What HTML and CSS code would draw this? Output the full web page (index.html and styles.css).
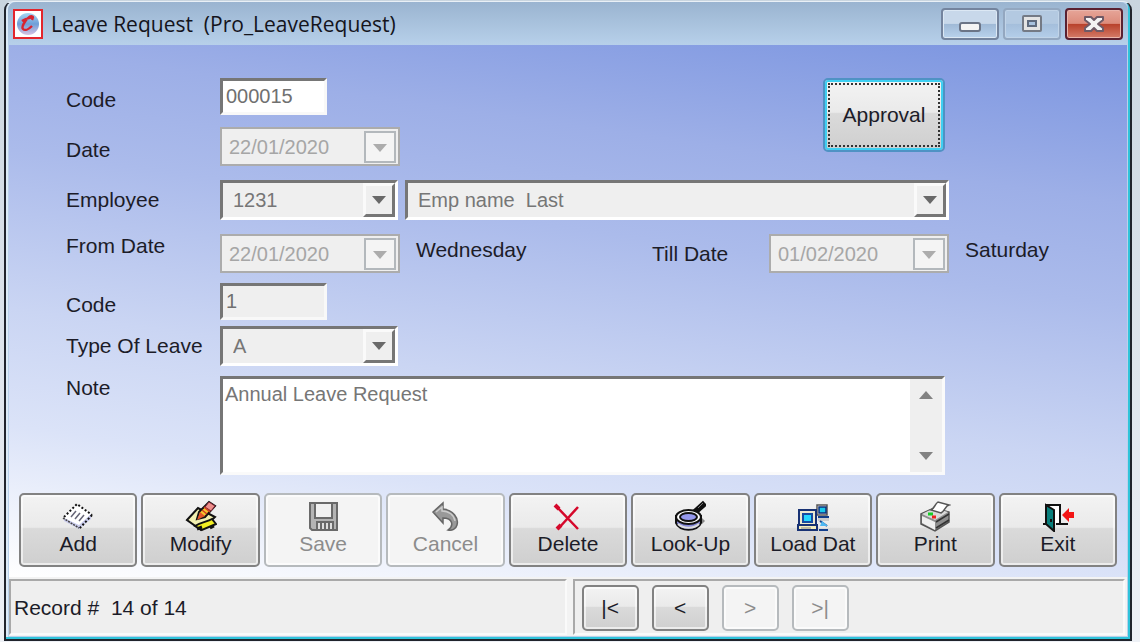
FILE: index.html
```html
<!DOCTYPE html>
<html lang="en">
<head>
    <meta charset="UTF-8">
    <meta name="viewport" content="width=device-width, initial-scale=1.0">
    <title>Leave Request</title>
    <link rel="stylesheet" href="styles.css">
</head>
<body>
    <div class="window">
        <header class="titlebar">
            <svg class="app-icon" viewBox="0 0 30 30">
                <defs>
                    <linearGradient id="ball" x1="0" y1="0" x2="0" y2="1">
                        <stop offset="0" stop-color="#a5d6f2"/>
                        <stop offset="0.5" stop-color="#6f9fd8"/>
                        <stop offset="1" stop-color="#d8c2e2"/>
                    </linearGradient>
                </defs>
                <rect x="1" y="1" width="28" height="28" fill="#fff" stroke="#e3262c" stroke-width="2"/>
                <circle cx="15" cy="15" r="11" fill="url(#ball)"/>
                <path d="M19 11c2-4-1-5-4-2s-7 9-5 11 6 0 9-3M9 12c4-3 8-3 12-4" fill="none" stroke="#d8232f" stroke-width="2.4"/>
            </svg>
            <h1>Leave Request&nbsp; (Pro_LeaveRequest)</h1>
            <div class="controls">
                <button class="control" aria-label="Minimize">
                    <svg width="24" height="20" viewBox="0 0 24 20"><rect x="2" y="9" width="20" height="8" rx="2" fill="#f4f4f4" stroke="#6b7486" stroke-width="2"/></svg>
                </button>
                <button class="control faded" aria-label="Maximize">
                    <svg width="24" height="20" viewBox="0 0 24 20"><rect x="3" y="2" width="18" height="15" rx="1" fill="#e4e4e4" stroke="#747a85" stroke-width="2"/><rect x="8" y="7" width="8" height="5" fill="#a9c3df" stroke="#5f6b7e" stroke-width="2"/></svg>
                </button>
                <button class="control close" aria-label="Close">
                    <svg width="24" height="20" viewBox="0 0 24 20"><path d="M3 3h6l3 3 3-3h6v3l-5 4 5 4v3h-6l-3-3-3 3H3v-3l5-4-5-4z" fill="#f3f3f3" stroke="#6f5a66" stroke-width="2" stroke-linejoin="round"/></svg>
                </button>
            </div>
        </header>

        <main class="form">
            <div class="top">
                <div>
                    <div class="row">
                        <label class="label low" for="code">Code</label>
                        <input class="text" id="code" type="text" value="000015" readonly>
                    </div>
                    <div class="row spaced">
                        <label class="label low" for="date">Date</label>
                        <div class="datebox">
                            <input id="date" type="text" value="22/01/2020" disabled>
                            <button class="drop" aria-label="Open calendar" disabled><svg width="14" height="8"><path d="M0 0h14L7 8z"/></svg></button>
                        </div>
                    </div>
                </div>
                <button class="button approval">Approval</button>
            </div>
            <div class="row wide spaced">
                <label class="label" for="employee">Employee</label>
                <div class="combo">
                    <select id="employee" disabled><option>1231</option></select>
                    <span class="arrow"><svg width="14" height="8"><path d="M0 0h14L7 8z"/></svg></span>
                </div>
                <div class="combo name">
                    <select aria-label="Employee name" disabled><option>Emp name&nbsp; Last</option></select>
                    <span class="arrow"><svg width="14" height="8"><path d="M0 0h14L7 8z"/></svg></span>
                </div>
            </div>
            <div class="row">
                <label class="label high" for="from">From Date</label>
                <div class="datebox">
                    <input id="from" type="text" value="22/01/2020" disabled>
                    <button class="drop" aria-label="Open calendar" disabled><svg width="14" height="8"><path d="M0 0h14L7 8z"/></svg></button>
                </div>
                <span class="weekday grow">Wednesday</span>
                <label class="label till" for="till">Till Date</label>
                <div class="datebox">
                    <input id="till" type="text" value="01/02/2020" disabled>
                    <button class="drop" aria-label="Open calendar" disabled><svg width="14" height="8"><path d="M0 0h14L7 8z"/></svg></button>
                </div>
                <span class="weekday last">Saturday</span>
            </div>
            <div class="row tight">
                <label class="label low" for="leave-code">Code</label>
                <input class="text grey" id="leave-code" type="text" value="1" readonly>
            </div>
            <div class="row">
                <label class="label" for="type">Type Of Leave</label>
                <div class="combo">
                    <select id="type" disabled><option>A</option></select>
                    <span class="arrow"><svg width="14" height="8"><path d="M0 0h14L7 8z"/></svg></span>
                </div>
            </div>
            <div class="row note-row">
                <label class="label high" for="note">Note</label>
                <div class="note">
                    <textarea id="note" readonly>Annual Leave Request</textarea>
                    <div class="scrollbar">
                        <svg width="14" height="8"><path d="M0 8h14L7 0z"/></svg>
                        <svg width="14" height="8"><path d="M0 0h14L7 8z"/></svg>
                    </div>
                </div>
            </div>

            <div class="toolbar">
                <button class="button tool">
                    <svg class="icon" viewBox="0 0 32 32">
                        <path d="M1 17 14 5l16 9-13 13z" fill="#fff"/>
                        <path d="M2 18l15 7 12-11v5L17 29 2 21z" fill="#c9cbec"/>
                        <path d="M2 17 15 4l15 11M30 15 17 29" fill="none" stroke="#111" stroke-width="2" stroke-dasharray="2 2"/>
                        <path d="M1 18l16 10" fill="none" stroke="#444" stroke-width="1.5" stroke-dasharray="2 1"/>
                        <path d="M9 17l5-6M13 19l5-6M17 21l5-6" stroke="#667" stroke-width="1.5"/>
                    </svg>
                    Add
                </button>
                <button class="button tool">
                    <svg class="icon" viewBox="0 0 32 32">
                        <path d="M2 20 13 8l17 9-14 13z" fill="#f2f0b0" stroke="#111" stroke-width="2"/>
                        <path d="M10 26c6-4 12-4 17-7l4 5-14 6z" fill="#f2ee22" stroke="#111" stroke-width="2"/>
                        <path d="M12 19l2-7L24 2l6 4-10 11z" fill="#f6c62d" stroke="#111" stroke-width="2"/>
                        <path d="M24 2l6 4-4 5-6-4z" fill="#ed8e8b" stroke="#7d2230" stroke-width="1"/>
                        <path d="M12 20l3-8 5 4z" fill="#e2562a"/>
                        <path d="M19 7l6 5M17 10l5 4" stroke="#d33c22" stroke-width="1.5"/>
                        <path d="M12 29l5-2M25 28l4-2" stroke="#111" stroke-width="3"/>
                    </svg>
                    Modify
                </button>
                <button class="button tool" disabled>
                    <svg class="icon" viewBox="0 0 32 32">
                        <path d="M3 3h27v27H5l-2-2z" fill="#b4b4b4" stroke="#6a6a6a" stroke-width="2"/>
                        <path d="M8 3h17v15H8z" fill="#f1f1f1" stroke="#6a6a6a" stroke-width="2"/>
                        <path d="M10 22h16v8H10z" fill="#dedede" stroke="#6a6a6a" stroke-width="2"/>
                        <path d="M14 22v8M18 22v8M22 22v8" stroke="#6a6a6a" stroke-width="2"/>
                    </svg>
                    Save
                </button>
                <button class="button tool" disabled>
                    <svg class="icon" viewBox="0 0 32 32">
                        <path d="M3 12 13 3v6c10 1 16 9 14 16-1 4-5 6-9 5 6-4 5-12-5-12v5z" fill="#999" stroke="#666" stroke-width="1.5"/>
                        <path d="M6 12l6-5v4c7 0 12 4 13 10" fill="none" stroke="#ccc" stroke-width="1.5"/>
                    </svg>
                    Cancel
                </button>
                <button class="button tool">
                    <svg class="icon" viewBox="0 0 32 32">
                        <path d="M4 6l22 23M26 7 6 29" stroke="#d5082b" stroke-width="2.5"/>
                        <path d="M3 5l4 4M5 29l4-4" stroke="#d5082b" stroke-width="4"/>
                    </svg>
                    Delete
                </button>
                <button class="button tool">
                    <svg class="icon" viewBox="0 0 32 32">
                        <path d="M21 12 31 3" stroke="#111" stroke-width="6"/>
                        <path d="M24 8l5-5" stroke="#777" stroke-width="1"/>
                        <path d="M2 16v7c3 9 22 9 25 0v-7z" fill="#8588d8" stroke="#111" stroke-width="2"/>
                        <path d="M4 24c5 5 16 5 21 0" fill="none" stroke="#ddd" stroke-width="2"/>
                        <ellipse cx="14.500" cy="17" rx="12.500" ry="7" fill="#fff" stroke="#111" stroke-width="2"/>
                        <ellipse cx="14.500" cy="17" rx="8.500" ry="4" fill="#9598ec" stroke="#111" stroke-width="2"/>
                        <path d="M28 18l3 3-3 3" fill="#888"/>
                    </svg>
                    Look-Up
                </button>
                <button class="button tool">
                    <svg class="icon" viewBox="0 0 32 32">
                        <path d="M20 5h10v10H20z" fill="#fff" stroke="#555" stroke-width="1.500"/>
                        <path d="M22 7h7v6h-7z" fill="#18c8ec" stroke="#0c2f79" stroke-width="1.500"/>
                        <path d="M21 17h11v4H21z" fill="#ccc"/>
                        <path d="M21 17h11M23 21l7 5M22 30h9" stroke="#123e8b" stroke-width="2"/>
                        <path d="M23 26h8l-6-5z" fill="#4fb7f1"/>
                        <path d="M2 10h17v15H2z" fill="#eee9d0" stroke="#183274" stroke-width="2"/>
                        <path d="M6 14h9v8H6z" fill="#26d7ff" stroke="#174ca1" stroke-width="2"/>
                        <path d="M1 25h19v5H1z" fill="#f5eebd" stroke="#183274" stroke-width="2"/>
                        <path d="M4 28h10" stroke="#888" stroke-width="1"/>
                    </svg>
                    Load Dat
                </button>
                <button class="button tool">
                    <svg class="icon" viewBox="0 0 32 32">
                        <path d="M2 14 15 8l15 4v10L16 31 2 24z" fill="#8e8e8e" stroke="#555" stroke-width="1.500"/>
                        <path d="M3 14l12-6 14 4-13 8z" fill="#dadada"/>
                        <path d="M3 16l13 6v8L3 23z" fill="#efefef"/>
                        <path d="M12 10c3-1 4-6 7-8l11 3c-4 1-4 6-8 8z" fill="#fff" stroke="#555" stroke-width="1.500"/>
                        <path d="M17 22l13-8M17 28l13-8" stroke="#333" stroke-width="1.5"/>
                        <path d="M9 14h5" stroke="#18cf28" stroke-width="3"/>
                        <path d="M13 17h4" stroke="#ed2222" stroke-width="3"/>
                    </svg>
                    Print
                </button>
                <button class="button tool">
                    <svg class="icon" viewBox="0 0 32 32">
                        <path d="M5 23V5h13v18" fill="#fff" stroke="#111" stroke-width="2"/>
                        <path d="M1 24h4M14 24h12" stroke="#111" stroke-width="2"/>
                        <path d="M4 5l8 5v21l-8-7z" fill="#087f7c" stroke="#111" stroke-width="2"/>
                        <path d="M9 19v3" stroke="#111" stroke-width="2"/>
                        <path d="M20 15l7-7v4h5v6h-5v4z" fill="#f31515"/>
                    </svg>
                    Exit
                </button>
            </div>
        </main>

        <footer class="status">
            <div class="panel">Record #&nbsp; 14 of 14</div>
            <div class="panel nav">
                <button class="button" aria-label="First record">|&lt;</button>
                <button class="button" aria-label="Previous record">&lt;</button>
                <button class="button" aria-label="Next record" disabled>&gt;</button>
                <button class="button" aria-label="Last record" disabled>&gt;|</button>
            </div>
        </footer>
    </div>
</body>
</html>
```
FILE: styles.css
```css
* {
    box-sizing: border-box;
}
body {
    margin: 0;
    padding: 1px 8px 2px 4px;
    background: linear-gradient(#c9d5df, #eef1f6);
    font-family: "Liberation Sans", Arial, sans-serif;
    font-size: 21px;
    line-height: 24px;
    color: #1c1c28;
}
button, input, select, textarea {
    font: inherit;
    color: inherit;
    margin: 0;
}

/* Window frame */
.window {
    border: 2px solid #20242c;
    border-top: 1px solid #e9f0f6;
    border-radius: 9px 9px 0 0;
    background: #b9d1ea;
    padding: 0 3px 3px;
    box-shadow: inset -2px -2px 0 #2fc3da, inset 2px 0 0 #dcebf8;
}
.titlebar {
    display: flex;
    align-items: center;
    height: 43px;
    margin: 0 -1px;
    padding: 0 5px;
    background: linear-gradient(#9ab4d0, #b7d0ea);
    border-radius: 8px 8px 0 0;
}
.app-icon {
    width: 30px;
    height: 30px;
}
.titlebar h1 {
    flex: 1;
    margin: 0 0 0 8px;
    font-family: "Open Sans", "Noto Sans", sans-serif;
    font-size: 21px;
    font-weight: 400;
    color: #14141c;
}
.controls {
    display: flex;
    gap: 4px;
}
.control {
    display: flex;
    align-items: center;
    justify-content: center;
    width: 58px;
    height: 32px;
    padding: 0;
    border: 2px solid #74849e;
    border-radius: 4px;
    background: linear-gradient(#c8d8ea 48%, #9fb9d6 50%, #b9d2ec);
    box-shadow: inset 0 0 0 1px #dce8f4;
}
.faded {
    border-color: #93a7c0;
    background: linear-gradient(#b3c9e1 48%, #a4bedb 50%, #b4cee9);
    box-shadow: inset 0 0 0 1px #c1d4e8;
}
.close {
    border-color: #5a2030;
    background: linear-gradient(#e6a598 0%, #dc8b7b 48%, #b8402a 50%, #d47b68);
    box-shadow: inset 0 0 0 1px #eab5ab;
}

/* Form */
.form {
    padding: 33px 0 10px 57px;
    background: linear-gradient(188deg, #7a94e0 0%, #9dafe7 23%, #abbbeb 38%, #cad5f3 61%, #dbe3f8 78%, #fff 100%);
}
.top {
    display: flex;
    justify-content: space-between;
    align-items: flex-start;
    margin-right: 182px;
}
.row {
    display: flex;
    align-items: center;
    margin-bottom: 10px;
}
.top .row {
    margin-bottom: 12px;
}
.row.spaced {
    margin-bottom: 14px;
}
.row.tight {
    margin-bottom: 6px;
}
.wide {
    margin-right: 178px;
}
.note-row {
    margin-right: 182px;
}
.label {
    flex: none;
    width: 154px;
}
.low {
    padding-top: 6px;
}
.high {
    align-self: flex-start;
}
.till {
    width: 117px;
}
.weekday {
    align-self: flex-start;
    padding: 4px 0 0 16px;
}
.grow {
    flex: 1;
}
.last {
    width: 178px;
}

.text {
    width: 107px;
    height: 37px;
    padding: 0 3px;
    border: 3px solid;
    border-color: #767676 #f8f8f8 #f8f8f8 #767676;
    background: #fff;
    font-size: 20px;
    color: #707070;
}
.grey {
    background: #efefef;
}
.datebox {
    display: flex;
    align-items: center;
    width: 180px;
    height: 39px;
    padding-right: 2px;
    border: 2px solid #acacac;
    background: #efefef;
}
.datebox input {
    flex: 1;
    min-width: 0;
    padding: 0 0 0 7px;
    border: 0;
    background: none;
    font-size: 20px;
    color: #a6a6a6;
}
.drop {
    display: flex;
    align-items: center;
    justify-content: center;
    width: 32px;
    height: 32px;
    padding: 3px 0 0;
    border: 2px solid #b3b8bc;
    background: #f4f4f4;
}
.drop svg {
    fill: #acacac;
}
.combo {
    position: relative;
    width: 178px;
    height: 40px;
    border: 3px solid;
    border-color: #767676 #fff #fff #767676;
    background: #efefef;
}
.combo select {
    appearance: none;
    width: 100%;
    height: 100%;
    padding: 0 36px 0 10px;
    border: 0;
    background: none;
    font-size: 20px;
    color: #767676;
    opacity: 1;
}
.name {
    flex: 1;
    margin-left: 7px;
}
/* Sits over the right end of the select */
.arrow {
    position: absolute;
    top: 0;
    right: 0;
    bottom: 0;
    display: flex;
    align-items: center;
    justify-content: center;
    width: 32px;
    border: 3px solid;
    border-color: #fafafa #767676 #767676 #fafafa;
    background: #efefef;
    pointer-events: none;
}
.arrow svg {
    fill: #696969;
}
.note {
    display: flex;
    flex: 1;
    height: 99px;
    border: 3px solid;
    border-color: #767676 #fafafa #fafafa #767676;
    background: #fff;
}
.note textarea {
    flex: 1;
    padding: 3px 0 0 2px;
    border: 0;
    outline: 0;
    resize: none;
    background: none;
    font-size: 20px;
    color: #767676;
}
.scrollbar {
    display: flex;
    flex-direction: column;
    align-items: center;
    justify-content: space-between;
    width: 32px;
    padding: 12px 0;
    background: #efefef;
}
.scrollbar svg {
    fill: #828282;
}

/* Buttons */
.button {
    padding: 0;
    border: 2px solid #828282;
    border-radius: 5px;
    background: linear-gradient(#f3f3f3, #eaeaea 46%, #dadada 48%, #cfcfcf);
    box-shadow: inset 0 0 0 2px rgba(255, 255, 255, 0.6);
}
.button:disabled {
    border-color: #b6babd;
    background: #f4f4f4;
    color: #8c8c8c;
}
.approval {
    width: 122px;
    height: 74px;
    border: 2px solid #4f92c4;
    box-shadow: inset 0 0 0 2px #3fd0f2;
    outline: 2px dotted #333;
    outline-offset: -7px;
}
.toolbar {
    display: flex;
    gap: 4px;
    margin: 18px 10px 0 -47px;
}
.tool {
    display: flex;
    flex: 1;
    flex-direction: column;
    align-items: center;
    height: 74px;
    padding-top: 5px;
    white-space: nowrap;
}
.icon {
    width: 32px;
    height: 32px;
    flex: none;
}

/* Status bar */
.status {
    display: flex;
    gap: 6px;
    padding: 2px 2px 1px 0;
    background: #f3f3f3;
}
.panel {
    flex: 1;
    height: 56px;
    padding: 15px 3px;
    border: 2px solid;
    border-color: #a9a9a9 #fafafa #fafafa #a9a9a9;
    background: #efefef;
}
.nav {
    display: flex;
    flex: none;
    gap: 13px;
    width: 49.5%;
    padding: 4px 7px;
}
.nav .button {
    width: 57px;
    height: 46px;
}
```
